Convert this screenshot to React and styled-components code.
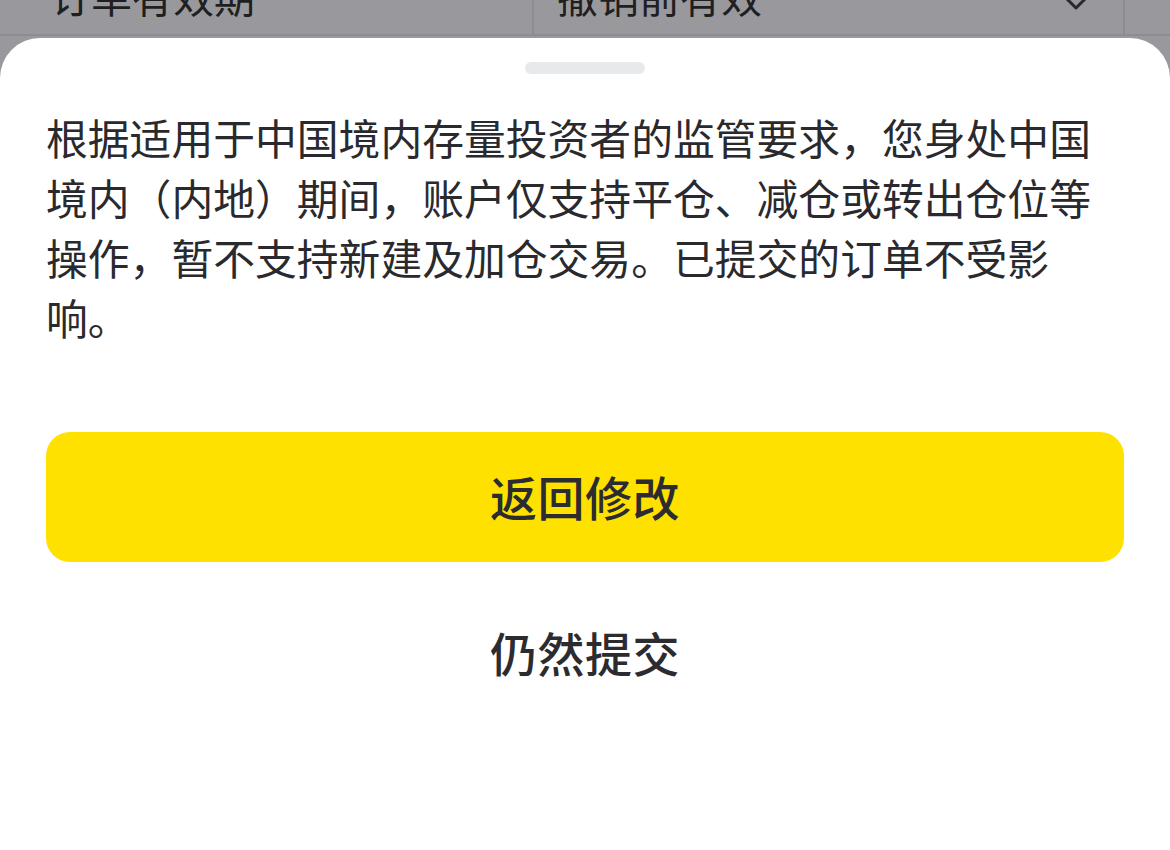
import styled, { createGlobalStyle } from 'styled-components'

const Global = createGlobalStyle`
   html, body {
      margin: 0;
      padding: 0;
      background: #99989d;
   }
   * {
      box-sizing: border-box;
   }
   body {
      font-family: "Noto Sans CJK SC", "Noto Sans", sans-serif;
   }
`

const Page = styled.div`
   width: 1170px;
   height: 850px;
   display: flex;
   flex-direction: column;
   background: #99989d;
   overflow: hidden;
`

const FormPeek = styled.div`
   height: 38px;
   overflow: hidden;
   flex-shrink: 0;
`

const FormRow = styled.div`
   display: flex;
   align-items: stretch;
   height: 80px;
   margin-top: -44px;
   border-bottom: 2px solid #8d8c91;
`

const FieldLabel = styled.div`
   width: 532px;
   display: flex;
   align-items: center;
   padding-left: 50px;
   font-size: 41px;
   color: #1f1f22;
`

const Select = styled.div`
   width: 593px;
   display: flex;
   align-items: center;
   justify-content: space-between;
   padding: 0 32px 0 23px;
   border-left: 2px solid #8d8c91;
   border-right: 2px solid #8d8c91;
   font-size: 41px;
   color: #1f1f22;
`

const ChevronBox = styled.span`
   display: flex;
   margin-top: 14px;
`

const Sheet = styled.div`
   flex: 1;
   background: #fff;
   border-radius: 40px 40px 0 0;
   display: flex;
   flex-direction: column;
   align-items: center;
   padding: 24px 46px 0;
`

const Handle = styled.div`
   width: 120px;
   height: 12px;
   border-radius: 6px;
   background: #e8e9eb;
`

const Message = styled.p`
   margin: 33px 0 0;
   align-self: stretch;
   font-size: 41.8px;
   line-height: 60px;
   color: #2a2a2e;
`

const Button = styled.button`
   width: 100%;
   height: 130px;
   margin-top: ${(props) => props.mt || '0'};
   border: none;
   border-radius: 24px;
   background: ${(props) => (props.primary ? '#ffe100' : 'transparent')};
   font-family: inherit;
   font-size: 47px;
   font-weight: 500;
   color: #2b2b30;
   letter-spacing: 0.5px;
   padding-bottom: 4px;
   cursor: pointer;
`

const Chevron = () => (
   <svg width="30" height="18" viewBox="0 0 30 18" fill="none">
      <path d="M2 2 L15 15 L28 2" stroke="#2a2a2e" strokeWidth="3" strokeLinejoin="round" />
   </svg>
)

export default function App() {
   return (
      <Page>
         <Global />
         <FormPeek>
            <FormRow>
               <FieldLabel>订单有效期</FieldLabel>
               <Select>
                  <span>撤销前有效</span>
                  <ChevronBox>
                     <Chevron />
                  </ChevronBox>
               </Select>
            </FormRow>
         </FormPeek>
         <Sheet>
            <Handle />
            <Message>
               根据适用于中国境内存量投资者的监管要求，您身处中国境内（内地）期间，账户仅支持平仓、减仓或转出仓位等操作，暂不支持新建及加仓交易。已提交的订单不受影响。
            </Message>
            <Button primary mt="85px">返回修改</Button>
            <Button mt="26px">仍然提交</Button>
         </Sheet>
      </Page>
   )
}
